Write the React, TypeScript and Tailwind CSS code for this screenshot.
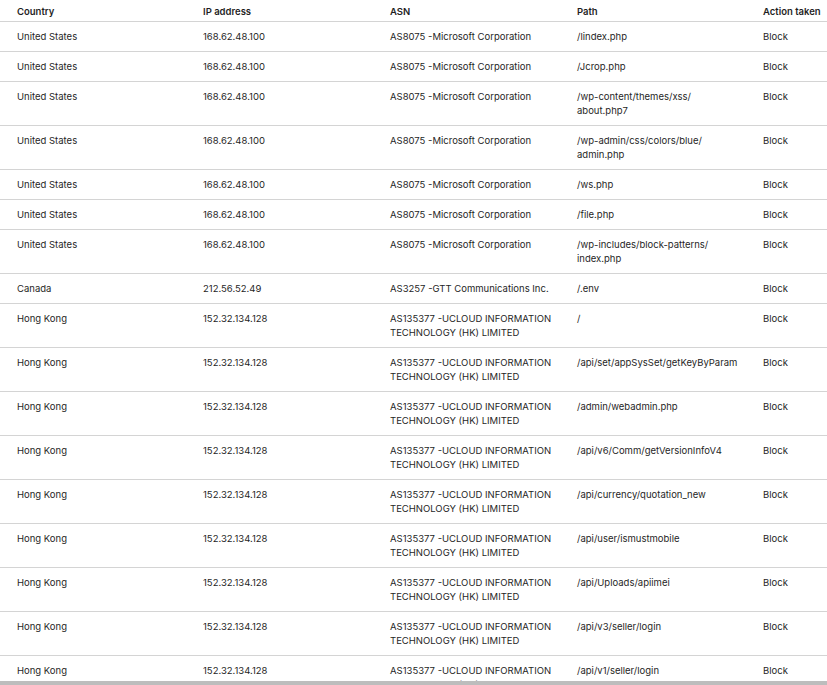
const US = "United States", HK = "Hong Kong";
const MS = ["AS8075 -Microsoft Corporation"];
const UC = ["AS135377 -UCLOUD INFORMATION", "TECHNOLOGY (HK) LIMITED"];
const rows: [string, string, string[], string[]][] = [
  [US, "168.62.48.100", MS, ["/lindex.php"]],
  [US, "168.62.48.100", MS, ["/Jcrop.php"]],
  [US, "168.62.48.100", MS, ["/wp-content/themes/xss/", "about.php7"]],
  [US, "168.62.48.100", MS, ["/wp-admin/css/colors/blue/", "admin.php"]],
  [US, "168.62.48.100", MS, ["/ws.php"]],
  [US, "168.62.48.100", MS, ["/file.php"]],
  [US, "168.62.48.100", MS, ["/wp-includes/block-patterns/", "index.php"]],
  ["Canada", "212.56.52.49", ["AS3257 -GTT Communications Inc."], ["/.env"]],
  [HK, "152.32.134.128", UC, ["/"]],
  [HK, "152.32.134.128", UC, ["/api/set/appSysSet/getKeyByParam"]],
  [HK, "152.32.134.128", UC, ["/admin/webadmin.php"]],
  [HK, "152.32.134.128", UC, ["/api/v6/Comm/getVersionInfoV4"]],
  [HK, "152.32.134.128", UC, ["/api/currency/quotation_new"]],
  [HK, "152.32.134.128", UC, ["/api/user/ismustmobile"]],
  [HK, "152.32.134.128", UC, ["/api/Uploads/apiimei"]],
  [HK, "152.32.134.128", UC, ["/api/v3/seller/login"]],
  [HK, "152.32.134.128", UC, ["/api/v1/seller/login"]],
];
const grid = "grid grid-cols-[186px_187px_187px_186px_1fr] pl-[17px]";
export default function App() {
  return (
    <div className="relative w-[827px] h-[685px] overflow-hidden bg-white text-[9.5px] leading-[14px] text-[#1f1f1f]" style={{ fontFamily: "Inter, sans-serif" }}>
      <div className={`${grid} h-[22px] items-start pt-[5px] font-semibold border-b border-[#d4d4d4]`}>
        <div>Country</div><div>IP address</div><div>ASN</div><div>Path</div><div>Action taken</div>
      </div>
      {rows.map((r, i) => (
        <div key={i} className={`${grid} pt-[8px] pb-[7px] border-b border-[#d4d4d4]`}>
          <div>{r[0]}</div>
          <div>{r[1]}</div>
          <div>{r[2].map((l, j) => <div key={j}>{l}</div>)}</div>
          <div>{r[3].map((l, j) => <div key={j}>{l}</div>)}</div>
          <div>Block</div>
        </div>
      ))}
      <div className="absolute left-0 right-0 bottom-0 h-[4px] bg-[#bdbdbd]" />
    </div>
  );
}
